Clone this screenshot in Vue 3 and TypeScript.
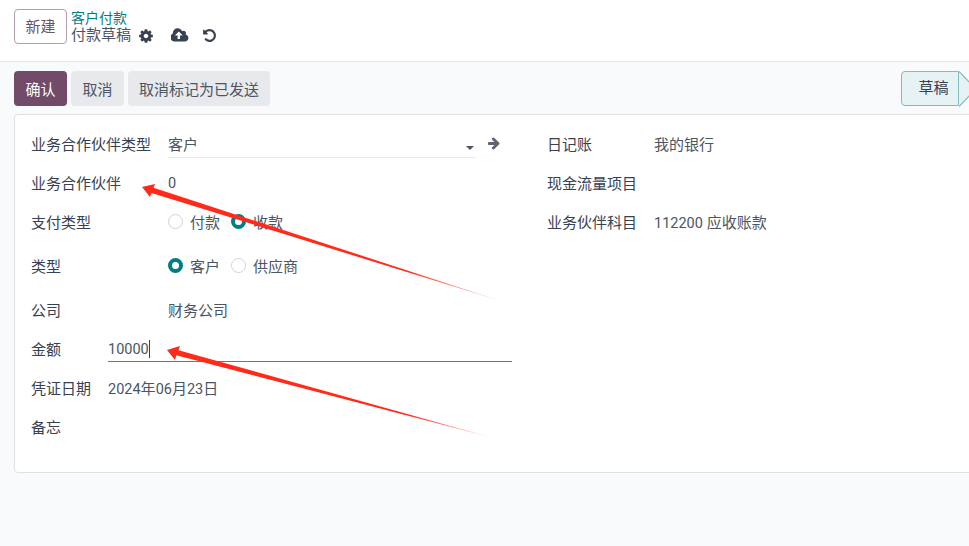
<script setup lang="ts">
const fa = {
  cog: 'M1152 896q0-106-75-181t-181-75-181 75-75 181 75 181 181 75 181-75 75-181zm512-109v222q0 12-8 23t-20 13l-185 28q-19 54-39 91 35 50 107 138 10 12 10 25t-9 23q-27 37-99 108t-94 71q-12 0-26-9l-138-108q-44 23-91 38-16 136-29 186-7 28-36 28h-222q-14 0-24.5-8.5t-11.5-21.5l-28-184q-49-16-90-37l-141 107q-10 9-25 9-14 0-25-11-126-114-165-168-7-10-7-23 0-12 8-23 15-21 51-66.5t54-70.5q-27-50-41-99l-183-27q-13-2-21-12.5t-8-23.5v-222q0-12 8-23t19-13l186-28q14-46 39-92-40-57-107-138-10-12-10-24 0-10 9-23 26-36 98.5-107.5t94.5-71.5q13 0 26 10l138 107q44-23 91-38 16-136 29-186 7-28 36-28h222q14 0 24.5 8.5t11.5 21.5l28 184q49 16 90 37l142-107q9-9 24-9 13 0 25 10 129 119 165 170 7 8 7 22 0 12-8 23-15 21-51 66.5t-54 70.5q26 50 41 98l183 28q13 2 21 12.5t8 23.5z',
  cloud: 'M1216 864q0-14-9-23l-352-352q-9-9-23-9t-23 9l-351 351q-10 12-10 24 0 14 9 23t23 9h224v352q0 13 9.5 22.5t22.5 9.5h192q13 0 22.5-9.5t9.5-22.5v-352h224q13 0 22.5-9.5t9.5-22.5zm640 288q0 159-112.5 271.5t-271.5 112.5h-1088q-185 0-316.5-131.5t-131.5-316.5q0-130 70-240t188-165q-2-30-2-43 0-212 150-362t362-150q156 0 285.5 87t188.5 231q71-62 166-62 106 0 181 75t75 181q0 76-41 138 130 31 213.5 135.5t83.5 238.5z',
  undo: 'M1664 896q0 156-61 298t-164 245-245 164-298 61q-172 0-327-72.5t-264-204.5q-7-10-6.5-22.5t8.5-20.5l137-138q10-9 25-9 16 2 23 12 73 95 179 147t225 52q104 0 198.5-40.5t163.5-109.5 109.5-163.5 40.5-198.5-40.5-198.5-109.5-163.5-163.5-109.5-198.5-40.5q-98 0-188 35.5t-160 101.5l137 138q31 30 14 69-17 40-59 40h-448q-26 0-45-19t-19-45v-448q0-42 40-59 39-17 69 14l130 129q107-101 244.5-156.5t284.5-55.5q156 0 298 61t245 164 164 245 61 298z',
  arrow: 'M1600 960q0 54-37 91l-651 651q-39 37-91 37-51 0-90-37l-75-75q-38-38-38-91t38-91l293-293h-704q-52 0-84.5-37.5t-32.5-90.5v-128q0-53 32.5-90.5t84.5-37.5h704l-293-294q-38-36-38-90t38-90l75-75q38-38 90-38 53 0 91 38l651 651q37 35 37 90z',
}
</script>

<template>
  <div class="page">
    <header class="head">
      <button class="btn-new">新建</button>
      <div class="crumbs">
        <a class="crumb-link">客户付款</a>
        <div class="crumb-line">
          <span>付款草稿</span>
          <svg class="ic-cog" viewBox="0 0 1792 1792"><path :d="fa.cog" /></svg>
          <svg class="ic-cloud" viewBox="0 0 1920 1792"><path :d="fa.cloud" /></svg>
          <svg class="ic-undo" viewBox="0 0 1792 1792"><path :d="fa.undo" /></svg>
        </div>
      </div>
    </header>

    <div class="bar">
      <button class="btn primary">确认</button>
      <button class="btn">取消</button>
      <button class="btn long">取消标记为已发送</button>
      <div class="status">
        <span>草稿</span>
        <svg class="chev" width="10" height="36" viewBox="0 0 10 36">
          <path d="M0 .5 L12 13 V23 L0 35.5 Z" fill="#e6f2f3" />
          <path d="M0 .5 L12 13 M12 23 L0 35.5" fill="none" stroke="#7fbdc0" stroke-width="1.2" />
        </svg>
      </div>
    </div>

    <section class="card">
      <div class="col left">
        <div class="row">
          <label>业务合作伙伴类型</label>
          <div class="select-wrap">
            <div class="select"><span>客户</span><i class="caret"></i></div>
            <svg class="ic-arrow" viewBox="0 0 1792 1792"><path :d="fa.arrow" /></svg>
          </div>
        </div>
        <div class="row"><label>业务合作伙伴</label><span class="val num zero">0</span></div>
        <div class="row tall">
          <label>支付类型</label>
          <div class="radios">
            <span class="radio"></span><span class="rt">付款</span>
            <span class="radio on"></span><span class="rt">收款</span>
          </div>
        </div>
        <div class="row tall">
          <label>类型</label>
          <div class="radios">
            <span class="radio on"></span><span class="rt">客户</span>
            <span class="radio"></span><span class="rt">供应商</span>
          </div>
        </div>
        <div class="row"><label>公司</label><span class="val">财务公司</span></div>
        <div class="row narrow">
          <label>金额</label>
          <div class="amount"><span class="num">10000</span><i class="cursor"></i></div>
        </div>
        <div class="row narrow">
          <label>凭证日期</label>
          <span class="val"><span class="num">2024</span>年<span class="num">06</span>月<span class="num">23</span>日</span>
        </div>
        <div class="row narrow"><label>备忘</label></div>
      </div>
      <div class="col right">
        <div class="row"><label>日记账</label><span class="val">我的银行</span></div>
        <div class="row"><label>现金流量项目</label></div>
        <div class="row"><label>业务伙伴科目</label><span class="val"><span class="num">112200</span> 应收账款</span></div>
      </div>
    </section>

    <svg class="marks" width="969" height="546" viewBox="0 0 969 546">
      <defs>
        <linearGradient id="fa1" gradientUnits="userSpaceOnUse" x1="142" y1="187" x2="507" y2="303">
          <stop offset="0" stop-color="#ff2a1a" />
          <stop offset=".72" stop-color="#ff2a1a" />
          <stop offset="1" stop-color="#ff2a1a" stop-opacity="0.1" />
        </linearGradient>
        <linearGradient id="fa2" gradientUnits="userSpaceOnUse" x1="167" y1="350" x2="497" y2="439">
          <stop offset="0" stop-color="#ff2a1a" />
          <stop offset=".72" stop-color="#ff2a1a" />
          <stop offset="1" stop-color="#ff2a1a" stop-opacity="0.1" />
        </linearGradient>
      </defs>
      <path d="M142 187 L155 184 L153.5 187.7 L507 303 L151.5 193 L150 197 Z" fill="url(#fa1)" />
      <path d="M167 350 L180 346 L178.5 350.2 L497 439 L176.3 355.2 L175 360 Z" fill="url(#fa2)" />
    </svg>
  </div>
</template>

<style>
html, body { margin: 0; background: #f9fafb; overflow: hidden; }
</style>

<style scoped>
.page {
  position: relative;
  width: 969px;
  height: 546px;
  overflow: hidden;
  background: #f9fafb;
  font-family: Roboto, "Noto Sans CJK SC", sans-serif;
  font-size: 15px;
  color: #4b5563;
}
.num { font-size: 14.5px; }
.zero { padding-top: 2px; }
.head {
  height: 62px;
  box-sizing: border-box;
  display: flex;
  gap: 4px;
  padding: 9px 14px 0;
  background: #fff;
  border-bottom: 1px solid #e5e7eb;
  align-items: flex-start;
}
.btn-new {
  width: 53px;
  height: 35px;
  box-sizing: border-box;
  padding: 0 0 2px;
  background: #fff;
  border: 1px solid #b39dae;
  border-radius: 4px;
  color: #6b5566;
  font: inherit;
  font-size: 15px;
}
.crumbs { display: flex; flex-direction: column; line-height: 17px; }
.crumb-link { color: #017e84; font-size: 14px; height: 16px; line-height: 19px; }
.crumb-line {
  display: flex;
  align-items: center;
  height: 20px;
  color: #4b5563;
  font-size: 15px;
}
.ic-cog { width: 16px; height: 16px; fill: #374151; margin: 2px 0 0 7px; }
.ic-cloud { width: 18px; height: 17px; fill: #374151; margin: 1px 0 0 17px; }
.ic-undo { width: 15px; height: 15px; fill: #374151; margin: 1px 0 0 13px; }
.bar {
  display: flex;
  gap: 4px;
  height: 52px;
  box-sizing: border-box;
  padding: 9px 0 0 14px;
  align-items: flex-start;
  position: relative;
}
.btn {
  height: 35px;
  padding: 0 11.5px;
  background: #e7e9ed;
  border: 0;
  border-radius: 4px;
  color: #4b5563;
  font: inherit;
  font-size: 15px;
}
.btn.long { padding: 0 11px; }
.btn.primary { background: #714b67; color: #fff; }
.status {
  margin-left: auto;
  width: 68px;
  height: 35px;
  display: flex;
  position: relative;
  flex: none;
  overflow: visible;
}
.status > span {
  width: 59px;
  height: 35px;
  box-sizing: border-box;
  padding-left: 7px;
  border: 1px solid #7fbdc0;
  border-radius: 4px 0 0 4px;
  background: #e6f2f3;
  text-align: center;
  line-height: 33px;
  color: #374151;
}
.chev { flex: none; }
.card {
  display: flex;
  gap: 35px;
  width: 980px;
  height: 359px;
  box-sizing: border-box;
  margin-left: 14px;
  padding: 9px 16px 0;
  background: #fff;
  border: 1px solid #dee2e6;
  border-radius: 4px;
}
.col.left { width: 481px; flex: none; }
.col.right { flex: 1; }
.row {
  display: flex;
  align-items: center;
  height: 39px;
}
.row.tall { margin-bottom: 5px; }
.row label { width: 137px; flex: none; color: #374151; }
.row.narrow label { width: 77px; }
.right .row label { width: 107px; }
.select-wrap { flex: 1; display: flex; align-items: flex-start; height: 26px; margin-top: 3px; }
.select {
  width: 307px;
  height: 26px;
  box-sizing: border-box;
  padding-bottom: 2px;
  display: flex;
  align-items: center;
  border-bottom: 1px solid #e5e7eb;
  position: relative;
}
.caret {
  position: absolute;
  right: 1px;
  top: 14px;
  border: 4px solid transparent;
  border-top-color: #4b5563;
  border-bottom: 0;
}
.ic-arrow { width: 14px; height: 14px; fill: #5f6673; margin: 4px 0 0 12px; }
.radios { display: flex; align-items: center; }
.radio {
  width: 15px;
  height: 15px;
  box-sizing: border-box;
  border: 1px solid #cfd3d8;
  border-radius: 50%;
  background: #fff;
}
.radio.on { border: 4px solid #017e84; }
.rt { margin: 0 11px 0 7px; }
.amount {
  flex: 1;
  height: 26px;
  box-sizing: border-box;
  padding-top: 2px;
  display: flex;
  align-items: center;
  border-bottom: 1px solid #3f8a8e;
}
.cursor { width: 1px; height: 18px; background: #374151; }
.marks { position: absolute; left: 0; top: 0; pointer-events: none; }
</style>
